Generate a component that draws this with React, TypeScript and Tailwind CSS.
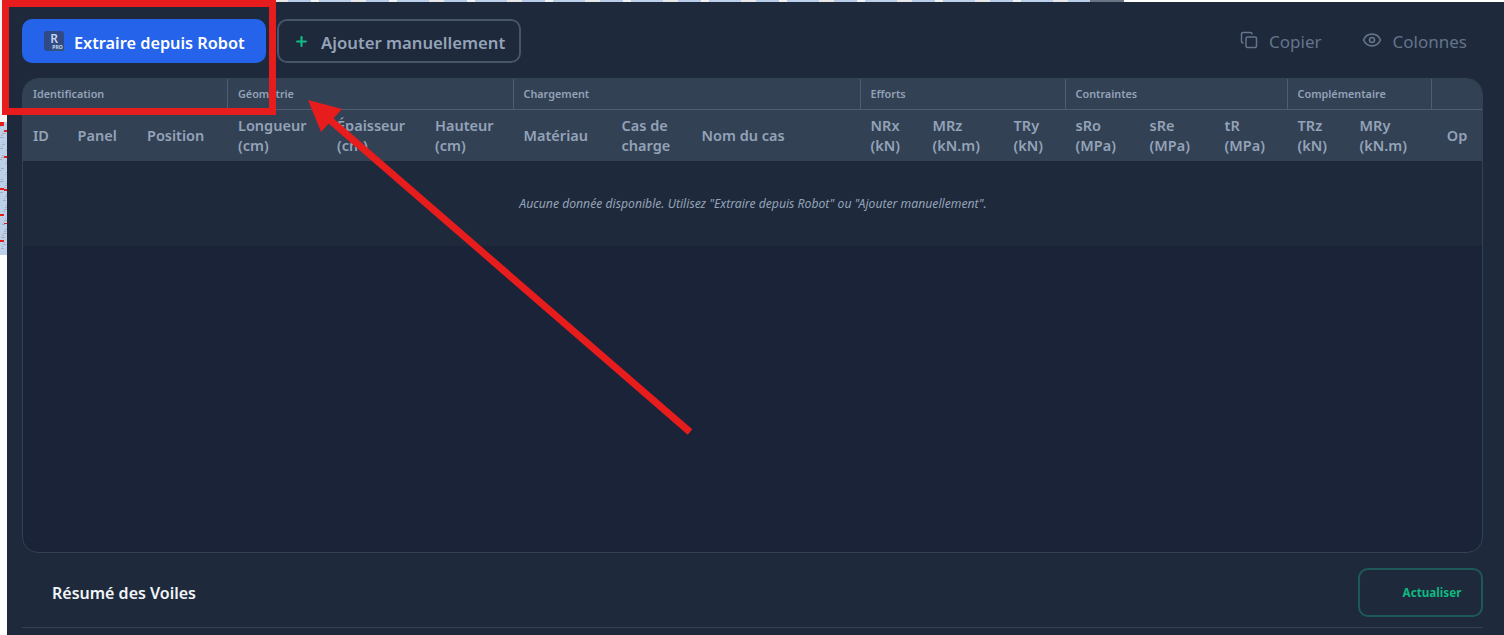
import { Copy, Eye, Plus } from "lucide-react";

const groups = [
  { label: "Identification", span: 3 },
  { label: "Géométrie", span: 3 },
  { label: "Chargement", span: 3 },
  { label: "Efforts", span: 3 },
  { label: "Contraintes", span: 3 },
  { label: "Complémentaire", span: 2 },
  { label: "", span: 1 },
];

const columns = [
  { top: "ID", width: "w-[44px]" },
  { top: "Panel", width: "w-[69.5px]" },
  { top: "Position", width: "w-[91px]" },
  { top: "Longueur", bottom: "(cm)", width: "w-[99px]" },
  { top: "Épaisseur", bottom: "(cm)", width: "w-[98px]" },
  { top: "Hauteur", bottom: "(cm)", width: "w-[88.5px]" },
  { top: "Matériau", width: "w-[98px]" },
  { top: "Cas de", bottom: "charge", width: "w-[80px]" },
  { top: "Nom du cas", width: "w-[169px]" },
  { top: "NRx", bottom: "(kN)", width: "w-[62px]" },
  { top: "MRz", bottom: "(kN.m)", width: "w-[81px]" },
  { top: "TRy", bottom: "(kN)", width: "w-[62px]" },
  { top: "sRo", bottom: "(MPa)", width: "w-[74px]" },
  { top: "sRe", bottom: "(MPa)", width: "w-[75px]" },
  { top: "tR", bottom: "(MPa)", width: "w-[73px]" },
  { top: "TRz", bottom: "(kN)", width: "w-[62px]" },
  { top: "MRy", bottom: "(kN.m)", width: "w-[82px]" },
  { top: "Op", width: "w-[52px]", center: true },
];

// petits traits de la capture visible derriere la fenetre
const noise = Array.from({ length: 46 }, (_, i) => ({
  x: (i * 5) % 7,
  y: 126 + ((i * 37) % 124),
  w: 1 + (i % 4),
}));
const redMarks = [
  [0, 122, 4, 4],
  [4, 130, 3, 2],
  [4, 156, 3, 2],
  [0, 188, 4, 2],
  [4, 189, 3, 2],
  [0, 214, 4, 2],
  [4, 223, 3, 1],
  [0, 240, 4, 2],
];

function RobotLogo() {
  return (
    <span className="relative flex h-[20px] w-[20px] shrink-0 items-start justify-center rounded-[3px] bg-[#2f4a86]">
      <span className="text-[12px] leading-[15px] font-semibold text-[#c5d3f0]">R</span>
      <span className="absolute right-0 bottom-0 h-[7px] w-[13px] rounded-[1px] bg-[#34527f] text-center text-[5px] leading-[7px] font-bold text-[#c5d3f0]">
        PRO
      </span>
    </span>
  );
}

export default function App() {
  return (
    <div className="relative flex h-[635px] w-[1504px] overflow-hidden bg-white font-['Noto_Sans',sans-serif]">
      <div className="h-[255px] w-[7px] shrink-0 bg-[#bdd0e9]">
        <svg width="7" height="255" viewBox="0 0 7 255">
          <rect x="0" y="0" width="7" height="122" fill="#f4f4f4" />
          {noise.map((n, i) => (
            <rect key={i} x={n.x} y={n.y} width={n.w} height="1" fill="#a9aeb6" />
          ))}
          {redMarks.map(([x, y, w, h], i) => (
            <rect key={i} x={x} y={y} width={w} height={h} fill="#e71c1c" />
          ))}
        </svg>
      </div>
      <div className="flex min-w-0 flex-1 flex-col">
        <div className="flex h-[2px] shrink-0">
          <div className="w-[1083px] bg-[repeating-linear-gradient(90deg,#bdd0e9_0_32px,#e8e8e8_32px_47px,#b9cde8_47px_70px,#f2f2f2_70px_78px)]" />
          <div className="w-[34px] bg-[#6b7482]" />
          <div className="flex-1 bg-white" />
        </div>
        <div className="flex min-h-0 flex-1 flex-col bg-[#1e293b] pr-[21px] pl-[15px]">
          <div className="flex h-[76px] shrink-0 items-start pt-[17px]">
            <button className="flex h-[44px] w-[244px] items-center gap-[10px] rounded-[10px] bg-[#2563eb] pl-[22px] text-[16.3px] font-semibold text-white">
              <RobotLogo />
              <span className="pt-[4px]">Extraire depuis Robot</span>
            </button>
            <button className="ml-[11px] flex h-[44px] w-[244px] items-center gap-[12px] rounded-[10px] border-2 border-[#475569] pl-[15px] text-[16.7px] font-semibold text-[#94a3b8]">
              <Plus size={15} strokeWidth={3.5} className="text-[#10b981]" />
              <span className="pt-[3px]">Ajouter manuellement</span>
            </button>
            <div className="ml-auto flex items-center pt-[10px] text-[17px] text-[#64748b]">
              <Copy size={18} className="mb-[3px]" />
              <span className="ml-[11px]">Copier</span>
              <Eye size={20} className="mb-[3px] ml-[40px]" />
              <span className="mr-[16px] ml-[11px]">Colonnes</span>
            </div>
          </div>

          <div className="h-[475px] shrink-0 overflow-hidden rounded-[16px] border border-[#334155] bg-[#1a2337]">
            <table className="w-full table-fixed border-collapse">
              <colgroup>
                {columns.map((c) => (
                  <col key={c.top} className={c.width} />
                ))}
              </colgroup>
              <thead>
                <tr className="h-[30px] border-b border-[#4f5d73] bg-[#334155]">
                  {groups.map((g, i) => (
                    <th
                      key={i}
                      colSpan={g.span}
                      className={`px-[10px] text-left text-[10.8px] font-semibold text-[#94a3b8] ${
                        i < groups.length - 1 ? "border-r border-[#4f5d73]" : ""
                      }`}
                    >
                      {g.label}
                    </th>
                  ))}
                </tr>
                <tr className="h-[52px] bg-[#334155]">
                  {columns.map((c, i) => (
                    <th
                      key={c.top}
                      className={`text-[14.5px] leading-[20px] font-semibold whitespace-nowrap text-[#94a3b8] ${
                        c.center ? "text-center" : "text-left"
                      } ${i === 0 ? "px-[10px]" : "px-[10.5px]"}`}
                    >
                      {c.top}
                      {c.bottom && <br />}
                      {c.bottom}
                    </th>
                  ))}
                </tr>
              </thead>
              <tbody>
                <tr className="h-[85px] bg-[#1e293b]">
                  <td colSpan={18} className="pt-[2px] text-center text-[12.2px] text-[#94a3b8] italic">
                    Aucune donnée disponible. Utilisez "Extraire depuis Robot" ou "Ajouter manuellement".
                  </td>
                </tr>
              </tbody>
            </table>
          </div>

          <div className="flex h-[75px] shrink-0 items-start justify-between border-b border-[#334155] pt-[15px]">
            <h2 className="mt-[13px] pl-[30px] text-[16px] font-semibold text-[#f1f5f9]">Résumé des Voiles</h2>
            <button className="h-[49px] w-[125px] rounded-[10px] border-2 border-[#1d5a57] pl-[23px] text-[11.7px] font-bold text-[#10b981]">
              Actualiser
            </button>
          </div>
        </div>
      </div>

      {/* annotation rouge par dessus la capture */}
      <svg className="absolute inset-0" width="1504" height="635" viewBox="0 0 1504 635" fill="none">
        <rect x="5.5" y="3.5" width="267" height="108" stroke="#e71c1c" strokeWidth="7" />
        <line x1="690" y1="432" x2="330" y2="120" stroke="#e71c1c" strokeWidth="7" />
        <polygon points="308,100 342,109 321,132" fill="#e71c1c" />
      </svg>
    </div>
  );
}
